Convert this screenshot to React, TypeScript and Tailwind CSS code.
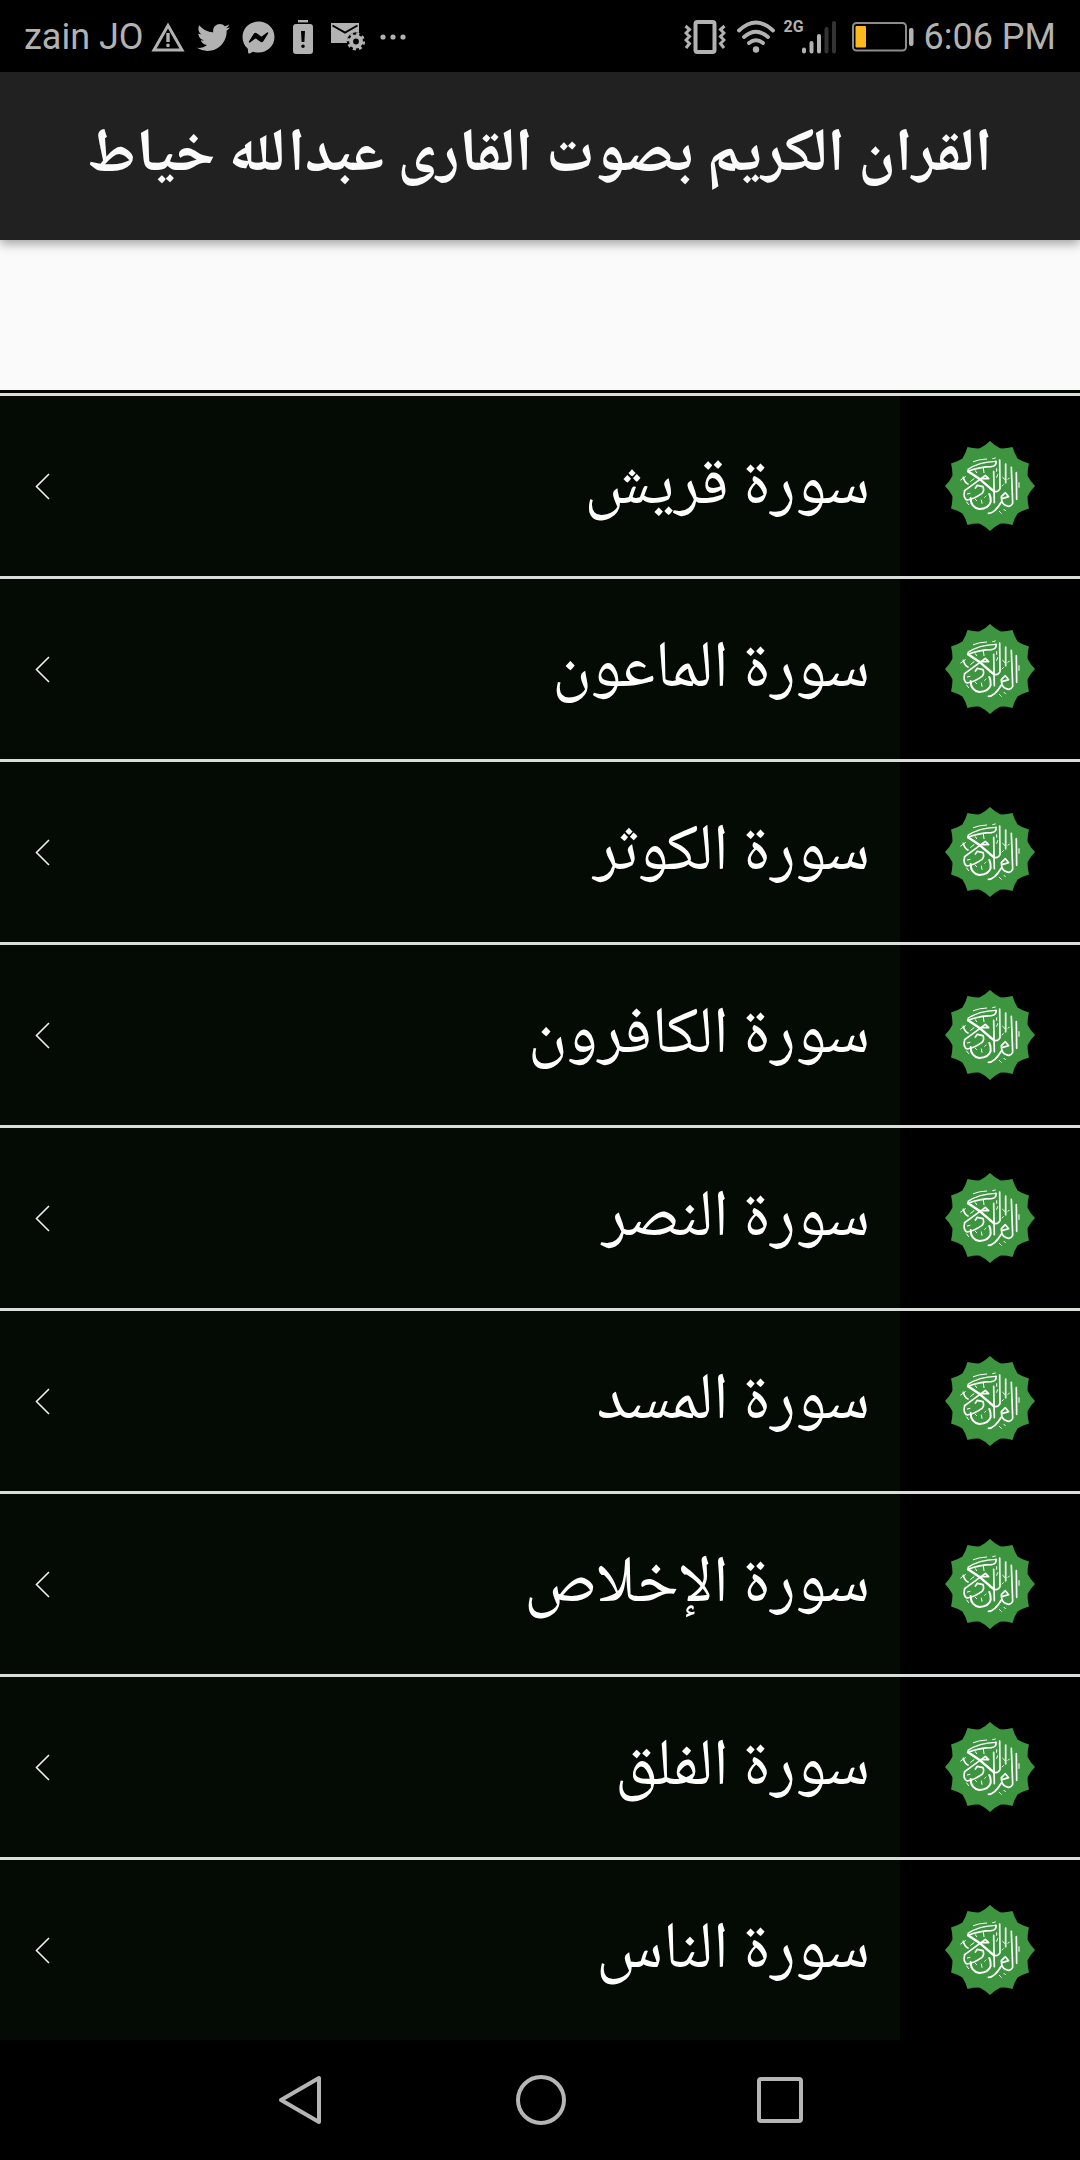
import React from "react";
import { FaTwitter, FaFacebookMessenger } from "react-icons/fa";

const surahs = [
  "سورة قريش",
  "سورة الماعون",
  "سورة الكوثر",
  "سورة الكافرون",
  "سورة النصر",
  "سورة المسد",
  "سورة الإخلاص",
  "سورة الفلق",
  "سورة الناس",
];

const starPath =
  Array.from({ length: 12 }, (_, i) => {
    const a = (i * Math.PI) / 6;
    const b = a + Math.PI / 12;
    const p = (r: number, t: number) =>
      `${(330 + r * Math.sin(t)).toFixed(1)} ${(348 - r * Math.cos(t)).toFixed(1)}`;
    return `${i === 0 ? "M" : "L"}${p(135, a)} Q${p(121, a + 0.13)} ${p(117, b)} Q${p(121, a + 0.394)} ${p(135, a + Math.PI / 6)}`;
  }).join(" ") + "Z";

function Emblem() {
  return (
    <svg viewBox="195 213 270 270" className="size-[90px]" aria-hidden="true">
      <path d={starPath} fill="#3d963f" />
      <g fill="none" stroke="#fff" strokeLinecap="round" strokeLinejoin="round">
        <path d="M264 304 L300 328 L342 364" strokeWidth="7" />
        <path d="M348 274 Q350 288 334 290 Q300 290 264 304" strokeWidth="5" />
        <path d="M264 298 Q296 276 348 274" strokeWidth="4" />
        <path d="M342 364 Q354 368 360 356 L359 270" strokeWidth="5" />
        <path d="M254 362 L300 328 L316 316 L326 326 L302 326" strokeWidth="5" />
        <path d="M250 322 Q254 338 264 342 M254 362 Q248 386 262 390 Q284 386 306 370 Q314 362 309 350 L292 346 L286 354" strokeWidth="5" />
        <path d="M341 304 L343 398 M325 430 Q344 430 364 396" strokeWidth="5" />
        <path d="M272 384 Q272 412 298 417 Q326 416 332 396 Q333 382 328 372" strokeWidth="6" />
        <path d="M377 282 L377 338 M409 308 L410 388" strokeWidth="5" />
        <path d="M394 292 L398 400 Q390 414 376 406 Q364 400 364 380 L376 368 L386 380 L366 386" strokeWidth="5" />
      </g>
      <g fill="none" stroke="#fff" strokeWidth="3" strokeLinecap="round">
        <path d="M280 275 Q296 268 320 267 M338 266 L346 264 M242 330 L256 320 M310 294 L312 308 M286 302 L290 308 M350 322 L353 314 M368 322 L376 330 M384 328 L388 324 M417 338 L417 352 M350 296 L350 304 M366 348 L370 344 M286 388 L290 392 M304 390 L306 400 M314 382 L318 378 M358 424 L364 430 M372 418 L376 422 M262 372 L270 370 M326 350 L330 358 M272 334 L282 326 M260 396 L266 404" />
      </g>
    </svg>
  );
}

function StatusBar() {
  return (
    <div className="flex h-[72px] items-center justify-between bg-black px-6 pt-0.5 text-4xl text-[#b2b2b2]">
      <div className="flex items-center">
        <span className="w-[127px] whitespace-nowrap">zain JO</span>
        <svg viewBox="0 0 34 30" className="h-[30px] w-[34px]" fill="none" stroke="currentColor">
          <path d="M17 3.5 L31 28 H3 Z" strokeWidth="3" />
          <path d="M17 11 V20" strokeWidth="3.4" />
          <circle cx="17" cy="23.4" r="1.8" fill="currentColor" stroke="none" />
        </svg>
        <FaTwitter className="ml-3 size-[33px]" />
        <FaFacebookMessenger className="ml-3 size-[33px]" />
        <svg viewBox="0 0 20 35" className="ml-[18px] h-[35px] w-5" fill="currentColor">
          <rect x="5" y="0" width="10" height="2.4" />
          <path
            fillRule="evenodd"
            d="M3 4 H17 Q20 4 20 7 V31 Q20 34 17 34 H3 Q0 34 0 31 V7 Q0 4 3 4 Z M8 11 L8.6 22 H11.4 L12 11 Z M10 24.5 A1.8 1.8 0 1 0 10 28.1 A1.8 1.8 0 1 0 10 24.5 Z"
          />
        </svg>
        <svg viewBox="0 0 34 28" className="ml-[18px] h-7 w-[34px]">
          <rect width="28" height="20" fill="currentColor" />
          <path d="M1.5 2.5 L14 9.5 L26.5 2.5" fill="none" stroke="#000" strokeWidth="2" />
          <circle cx="25" cy="18.5" r="9.2" fill="#000" />
          <circle cx="25" cy="18.5" r="4.9" fill="none" stroke="currentColor" strokeWidth="4" />
          <circle cx="25" cy="18.5" r="7.7" fill="none" stroke="currentColor" strokeWidth="2.8" strokeDasharray="3 3.05" />
        </svg>
        <svg viewBox="0 0 26 6" className="ml-[15px] h-1.5 w-[26px]" fill="currentColor">
          <circle cx="3" cy="3" r="2.6" />
          <circle cx="13" cy="3" r="2.6" />
          <circle cx="23" cy="3" r="2.6" />
        </svg>
      </div>
      <div className="flex items-center">
        <svg viewBox="0 0 42 34" className="h-[34px] w-[42px]" fill="none" stroke="currentColor">
          <rect x="11.5" y="2" width="19" height="30" rx="2" strokeWidth="4" />
          <path
            d="M1.5 6 L5.5 9.5 L2 13 L5.5 16.5 L2 20 L5.5 23.5 L2 28 M40.5 6 L36.5 9.5 L40 13 L36.5 16.5 L40 20 L36.5 23.5 L40 28"
            strokeWidth="3"
          />
        </svg>
        <svg viewBox="0 0 40 34" className="ml-2.5 h-[34px] w-10" fill="none" stroke="currentColor" strokeWidth="3.8" strokeLinecap="round">
          <path d="M3 10.5 Q20 -5.5 37 10.5 M8 17 Q20 6.5 32 17 M13 23 Q20 17.5 27 23" />
          <circle cx="20" cy="29.5" r="3.2" fill="currentColor" stroke="none" />
        </svg>
        <span className="ml-2 h-9 w-[18px] text-base leading-4 font-bold whitespace-nowrap">2G</span>
        <svg viewBox="0 0 34 34" className="size-[34px]" strokeWidth="4" strokeLinecap="round" aria-hidden="true">
          <path d="M2 29.5 V31.5 M9.5 23 V31.5 M17 16 V31.5" stroke="currentColor" />
          <path d="M24.5 9 V31.5 M32 3 V31.5" stroke="#333" />
        </svg>
        <svg viewBox="0 0 62 30" className="ml-4 h-[30px] w-[62px]">
          <rect x="1" y="1" width="53" height="27.5" rx="3.5" fill="none" stroke="#8c8c8c" strokeWidth="2" />
          <rect x="3.5" y="4" width="10.5" height="21.5" rx="1" fill="#fdb81e" />
          <rect x="57" y="6" width="4.5" height="18" rx="2" fill="currentColor" />
        </svg>
        <span className="ml-2.5 whitespace-nowrap">6:06 PM</span>
      </div>
    </div>
  );
}

export default function App() {
  return (
    <div className="bg-[#fafafa] font-[Roboto,sans-serif]">
      <StatusBar />
      <header className="relative flex h-[168px] items-center justify-center bg-[#212121] pb-0.5 shadow-[0_4px_10px_rgba(0,0,0,0.35)]">
        <h1 dir="rtl" className="whitespace-nowrap font-['Noto_Naskh_Arabic_UI','Noto_Naskh_Arabic','Noto_Sans_Arabic','DejaVu_Sans',sans-serif] text-[61px] leading-none font-bold text-[#fafafa]">
          القران الكريم بصوت القارى عبدالله خياط
        </h1>
      </header>
      <div className="h-[150px]" />
      <ul dir="rtl" className="divide-y-[3px] divide-[#dadeda] border-t-[3px] border-[#020502] bg-[#040b04]">
        <li className="h-[3px] bg-[#dadeda]" aria-hidden="true" />
        {surahs.map((name, i) => (
          <li key={name} className={i === 0 ? "border-t-0!" : ""}>
            <button type="button" className="flex h-[180px] w-full items-center text-white">
              <span className="flex h-full w-[180px] items-center justify-center bg-black">
                <Emblem />
              </span>
              <span className="flex-1 pr-[30px] text-right font-['Noto_Naskh_Arabic_UI','Noto_Naskh_Arabic','Noto_Sans_Arabic','DejaVu_Sans',sans-serif] text-[66px] leading-none">
                {name}
              </span>
              <svg viewBox="0 0 15 27" className="ml-[35px] h-[27px] w-[15px]" fill="none" stroke="#eee" strokeWidth="1.6">
                <path d="M14 1 L1.5 13.5 L14 26" />
              </svg>
            </button>
          </li>
        ))}
      </ul>
      <nav className="flex h-[120px] items-center justify-between bg-black pr-[277px] pl-[276px] text-[#b5b5b5]">
        <button type="button" aria-label="Back">
          <svg viewBox="0 0 48 52" className="h-[52px] w-12" fill="none" stroke="currentColor" strokeWidth="4" strokeLinejoin="round">
            <path d="M43 4 V48 L5 26 Z" />
          </svg>
        </button>
        <button type="button" aria-label="Home">
          <svg viewBox="0 0 50 50" className="size-[50px]" fill="none" stroke="currentColor" strokeWidth="4">
            <circle cx="25" cy="25" r="23" />
          </svg>
        </button>
        <button type="button" aria-label="Recent apps">
          <svg viewBox="0 0 46 46" className="size-[46px]" fill="none" stroke="currentColor" strokeWidth="4">
            <rect x="2" y="2" width="42" height="42" rx="2" />
          </svg>
        </button>
      </nav>
    </div>
  );
}
